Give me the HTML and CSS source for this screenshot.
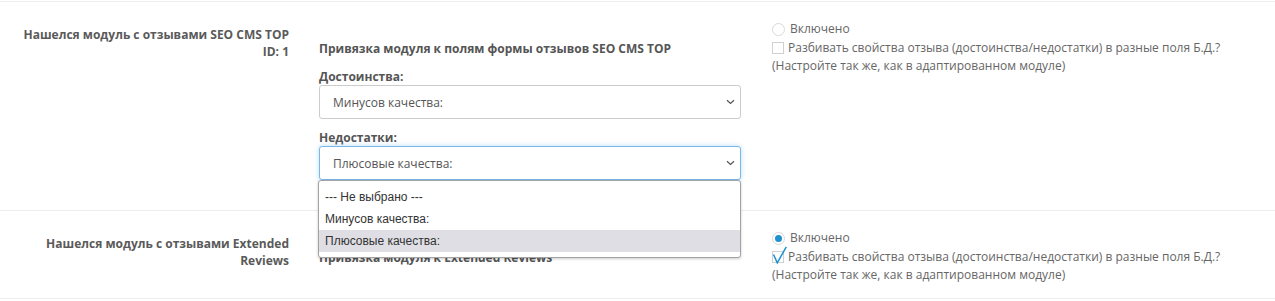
FILE: index.html
```html
<!DOCTYPE html>
<html lang="ru">
<head>
  <meta charset="UTF-8" />
  <title>Модули отзывов</title>
  <link rel="stylesheet" href="styles.css">
</head>
<body>

<div class="settings">

  <div class="row">
    <div class="row-label">Нашелся модуль с отзывами SEO CMS TOP ID: 1</div>
    <div class="row-fields">
      <div class="fields-title">Привязка модуля к полям формы отзывов SEO CMS TOP</div>

      <label class="field-label">Достоинства:</label>
      <div class="select-wrap">
        <select class="form-select">
          <option>Минусов качества:</option>
        </select>
        <svg class="chevron" width="9" height="6" viewBox="0 0 9 6"><path d="M1 1.2l3.5 3.3 3.5-3.3" /></svg>
      </div>

      <label class="field-label">Недостатки:</label>
      <div class="select-wrap">
        <select class="form-select focused">
          <option>Плюсовые качества:</option>
        </select>
        <svg class="chevron" width="9" height="6" viewBox="0 0 9 6"><path d="M1 1.2l3.5 3.3 3.5-3.3" /></svg>
        <ul class="dropdown">
          <li>--- Не выбрано ---</li>
          <li>Минусов качества:</li>
          <li class="hover">Плюсовые качества:</li>
        </ul>
      </div>
    </div>
    <div class="row-options">
      <div class="opt-line"><span class="radio"></span><span class="opt-text">Включено</span></div>
      <div class="opt-line"><span class="checkbox"></span><span class="opt-text">Разбивать свойства отзыва (достоинства/недостатки) в разные поля Б.Д.?</span></div>
      <div class="opt-note">(Настройте так же, как в адаптированном модуле)</div>
    </div>
  </div>

  <div class="row">
    <div class="row-label">Нашелся модуль с отзывами Extended Reviews</div>
    <div class="row-fields short">
      <div class="fields-title">Привязка модуля к Extended Reviews</div>
    </div>
    <div class="row-options">
      <div class="opt-line"><span class="radio checked"></span><span class="opt-text">Включено</span></div>
      <div class="opt-line">
        <span class="checkbox checked">
          <svg width="16" height="18" viewBox="0 0 16 18"><path d="M1.5 8.5l3.8 8.3 9-16" /></svg>
        </span>
        <span class="opt-text">Разбивать свойства отзыва (достоинства/недостатки) в разные поля Б.Д.?</span>
      </div>
      <div class="opt-note">(Настройте так же, как в адаптированном модуле)</div>
    </div>
  </div>

</div>

</body>
</html>
```

FILE: styles.css
```css
* {
  box-sizing: border-box;
}

body {
  margin: 0;
  background: #fff;
  font-family: 'Open Sans', sans-serif;
  font-size: 12px;
  color: #666;
}

.settings {
  padding-top: 1px;
}

.row {
  display: grid;
  grid-template-columns: 289px 422px 1fr;
  column-gap: 30px;
  border-top: 1px solid #ededed;
}

.row:last-child {
  border-bottom: 1px solid #ededed;
}

.row-label {
  padding: 24px 0 0 15px;
  text-align: right;
  font-weight: 700;
  line-height: 17px;
  color: #5a5a5a;
}

.row-fields {
  padding: 38px 0 30px;
}

.row-fields.short {
  padding-bottom: 0;
}

.fields-title {
  font-weight: 700;
  line-height: 17px;
  color: #555;
  margin-bottom: 11px;
}

.field-label {
  display: block;
  font-weight: 700;
  line-height: 17px;
  color: #555;
}

.select-wrap {
  position: relative;
}

.select-wrap + .field-label {
  margin-top: 10px;
}

.form-select {
  appearance: none;
  -webkit-appearance: none;
  display: block;
  width: 100%;
  height: 34px;
  margin: 0;
  padding: 0 30px 0 13px;
  border: 1px solid #ccc;
  border-radius: 3px;
  background: #fff;
  font-family: 'Open Sans', sans-serif;
  font-size: 12px;
  color: #555;
  outline: none;
}

.form-select.focused {
  border-color: #7ab8ea;
  box-shadow: 0 0 5px rgba(102, 175, 233, 0.45);
}

.chevron {
  position: absolute;
  right: 6px;
  top: 14px;
  fill: none;
  stroke: #555;
  stroke-width: 1.2;
  pointer-events: none;
}

.dropdown {
  position: absolute;
  top: 100%;
  left: -1px;
  width: 423px;
  margin: 0;
  padding: 5px 0 5px;
  list-style: none;
  background: #fff;
  border: 1px solid #a3a3a3;
  border-radius: 3px;
  box-shadow: 0 1px 3px rgba(0, 0, 0, 0.2);
  z-index: 10;
}

.dropdown li {
  height: 22px;
  line-height: 22px;
  padding-left: 6px;
  font-family: 'Liberation Sans', Arial, sans-serif;
  font-size: 12px;
  color: #333;
}

.dropdown li.hover {
  background: #dfdee4;
}

.row-options {
  padding: 18px 0 13px 1px;
  line-height: 18.5px;
}

.opt-line {
  display: flex;
  align-items: center;
  height: 18.5px;
}

.radio {
  position: relative;
  width: 13px;
  height: 13px;
  margin-right: 5px;
  border: 1px solid #d9d9d9;
  border-radius: 50%;
  background: #fff;
  flex-shrink: 0;
}

.radio.checked::after {
  content: '';
  position: absolute;
  left: 2px;
  top: 2px;
  width: 7px;
  height: 7px;
  border-radius: 50%;
  background: #1e91cf;
}

.checkbox {
  position: relative;
  width: 12px;
  height: 12px;
  margin-right: 4px;
  border: 1px solid #d0d0d0;
  background: #fff;
  flex-shrink: 0;
}

.checkbox svg {
  position: absolute;
  left: -1px;
  top: -6px;
  overflow: visible;
  fill: none;
  stroke: #1e91cf;
  stroke-width: 1.5;
}

.opt-text {
  white-space: nowrap;
}
```
